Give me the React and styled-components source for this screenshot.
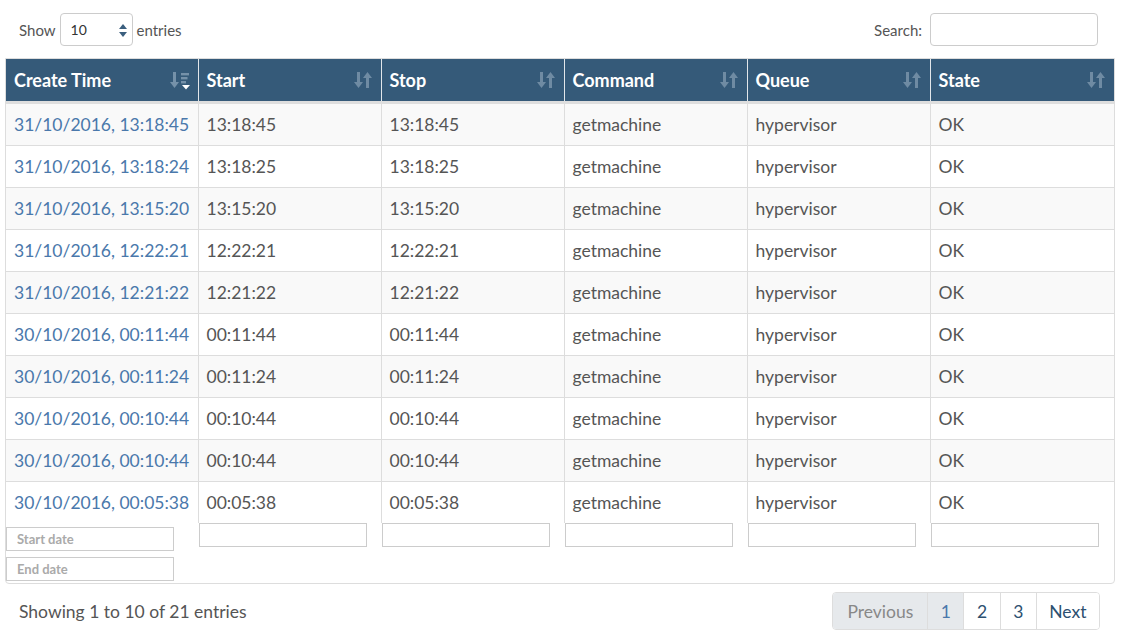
import React from 'react'
import styled, { createGlobalStyle } from 'styled-components'

const GlobalStyle = createGlobalStyle`
    body {
        margin: 0;
        background: #fff;
        font-family: Lato, "Open Sans", sans-serif;
        color: #555;
    }
`;

const Page = styled.div`
    width: 1110px;
    padding: 13px 0 0 5px;
`;

const TopBar = styled.div`
    display: flex;
    justify-content: space-between;
    align-items: center;
    padding: 0 17px 0 14px;
    height: 33px;
    font-size: 15px;
    color: #555;
`;

const Label = styled.label`
    display: flex;
    align-items: center;
    gap: 4px;
`;

const SelectBox = styled.div`
    position: relative;
    border: 1px solid #ccc;
    border-radius: 4px;
    display: flex;
    align-items: center;
    padding-left: 10px;
    box-sizing: border-box;
    width: 73px;
    height: 33px;
    font-size: 14px;
    color: #333;
`;

const Spinner = styled.svg`
    position: absolute;
    right: 5px;
    top: 10px;
`;

const SearchInput = styled.input`
    width: 168px;
    height: 33px;
    box-sizing: border-box;
    border: 1px solid #ccc;
    border-radius: 4px;
    margin-left: 4px;
`;

const Frame = styled.div`
    margin-top: 12px;
    border: 1px solid #ddd;
    border-radius: 0 0 4px 4px;
    width: 1110px;
    box-sizing: border-box;
`;

const Table = styled.table`
    width: 100%;
    border-collapse: collapse;
    table-layout: fixed;
    font-size: 17.5px;
`;

const Th = styled.th`
    background: #355a79;
    color: #fff;
    text-align: left;
    font-size: 18px;
    font-weight: 700;
    height: 42px;
    padding: 0 8px;
    border-left: 1px solid #e2e6ea;
    &:first-child { border-left: none; }
`;

const ThInner = styled.div`
    display: flex;
    justify-content: space-between;
    align-items: center;
`;

const Row = styled.tr`
    background: ${p => (p.$odd ? '#f9f9f9' : '#fff')};
    border-top: 1px solid #ddd;
    &:first-child { border-top: 3px solid #dedede; }
`;

const Td = styled.td`
    height: 41px;
    padding: 0 8px;
    border-left: 1px solid #ddd;
    color: ${p => (p.$link ? '#4a78ab' : '#555')};
    white-space: nowrap;
    &:first-child { border-left: none; }
`;

const FootCell = styled.td`
    vertical-align: top;
    padding: 0 0 2px 1px;
    &:first-child { padding: 4px 0 2px 0; }
`;

const FootInput = styled.input`
    display: block;
    width: 168px;
    height: 24px;
    box-sizing: border-box;
    border: 1px solid #ccc;
    border-radius: 0;
    font-family: Lato, sans-serif;
    font-size: 13px;
    font-weight: 700;
    padding: 0 10px;
    margin: 0;
    & + & { margin-top: 6px; }
    &::placeholder { color: #aaa; }
`;

const Bottom = styled.div`
    display: flex;
    justify-content: space-between;
    align-items: center;
    margin-top: 8px;
    padding: 0 0 0 14px;
    font-size: 17.5px;
    color: #555;
`;

const Pager = styled.div`
    display: flex;
    border: 1px solid #ddd;
    border-radius: 4px;
    overflow: hidden;
    margin-right: 15px;
`;

const PageBtn = styled.span`
    height: 36px;
    padding: 0 ${p => p.$pad || 12.5}px;
    display: flex;
    align-items: center;
    border-left: 1px solid #ddd;
    background: ${p => (p.$gray ? '#e6e9ec' : '#fff')};
    color: ${p => p.$color || '#2d5070'};
    &:first-child { border-left: none; }
`;

const SortIcon = ({ active }) => active ? (
    <svg width="20" height="20" viewBox="0 0 20 20">
        <g fill="#7591a9">
            <rect x="3" y="2" width="3" height="11" />
            <polygon points="0,12 9,12 4.5,18" />
            <rect x="11" y="3" width="8" height="2.4" />
            <rect x="11" y="7" width="6.5" height="2.4" />
            <rect x="11" y="11" width="5" height="2.4" />
        </g>
        <polygon points="12,15 20,15 16,19.5" fill="#fff" />
    </svg>
) : (
    <svg width="20" height="20" viewBox="0 0 20 20" fill="#6f8ba3">
        <rect x="4" y="2" width="3" height="11" />
        <polygon points="1,12 10,12 5.5,18" />
        <rect x="13" y="7" width="3" height="11" />
        <polygon points="10,8 19,8 14.5,2" />
    </svg>
);

const columns = ['Create Time', 'Start', 'Stop', 'Command', 'Queue', 'State'];
const widths = [192, 183, 183, 183, 183, 184];

const rows = [
    ['31/10/2016, 13:18:45', '13:18:45', '13:18:45'],
    ['31/10/2016, 13:18:24', '13:18:25', '13:18:25'],
    ['31/10/2016, 13:15:20', '13:15:20', '13:15:20'],
    ['31/10/2016, 12:22:21', '12:22:21', '12:22:21'],
    ['31/10/2016, 12:21:22', '12:21:22', '12:21:22'],
    ['30/10/2016, 00:11:44', '00:11:44', '00:11:44'],
    ['30/10/2016, 00:11:24', '00:11:24', '00:11:24'],
    ['30/10/2016, 00:10:44', '00:10:44', '00:10:44'],
    ['30/10/2016, 00:10:44', '00:10:44', '00:10:44'],
    ['30/10/2016, 00:05:38', '00:05:38', '00:05:38'],
];

const App = () => {
    return (
        <Page>
            <GlobalStyle />
            <TopBar>
                <Label>
                    Show
                    <SelectBox>
                        10
                        <Spinner width="8" height="13" viewBox="0 0 8 13">
                            <polygon points="0,5 8,5 4,0" fill="#3b5f7e" />
                            <polygon points="0,8 8,8 4,13" fill="#3b5f7e" />
                        </Spinner>
                    </SelectBox>
                    entries
                </Label>
                <Label>
                    Search:
                    <SearchInput />
                </Label>
            </TopBar>
            <Frame>
                <Table>
                    <colgroup>
                        {widths.map((w, i) => <col key={i} style={{ width: w }} />)}
                    </colgroup>
                    <thead>
                        <tr>
                            {columns.map((c, i) => (
                                <Th key={c}>
                                    <ThInner>
                                        {c}
                                        <SortIcon active={i === 0} />
                                    </ThInner>
                                </Th>
                            ))}
                        </tr>
                    </thead>
                    <tbody>
                        {rows.map((r, i) => (
                            <Row key={i} $odd={i % 2 === 0}>
                                <Td $link>{r[0]}</Td>
                                <Td>{r[1]}</Td>
                                <Td>{r[2]}</Td>
                                <Td>getmachine</Td>
                                <Td>hypervisor</Td>
                                <Td>OK</Td>
                            </Row>
                        ))}
                    </tbody>
                    <tfoot>
                        <tr>
                            <FootCell>
                                <FootInput placeholder="Start date" />
                                <FootInput placeholder="End date" />
                            </FootCell>
                            {[1, 2, 3, 4, 5].map(i => (
                                <FootCell key={i}><FootInput /></FootCell>
                            ))}
                        </tr>
                    </tfoot>
                </Table>
            </Frame>
            <Bottom>
                Showing 1 to 10 of 21 entries
                <Pager>
                    <PageBtn $gray $pad={14} $color="#888">Previous</PageBtn>
                    <PageBtn $gray $color="#4a78ab">1</PageBtn>
                    <PageBtn>2</PageBtn>
                    <PageBtn>3</PageBtn>
                    <PageBtn>Next</PageBtn>
                </Pager>
            </Bottom>
        </Page>
    )
}

export default App
